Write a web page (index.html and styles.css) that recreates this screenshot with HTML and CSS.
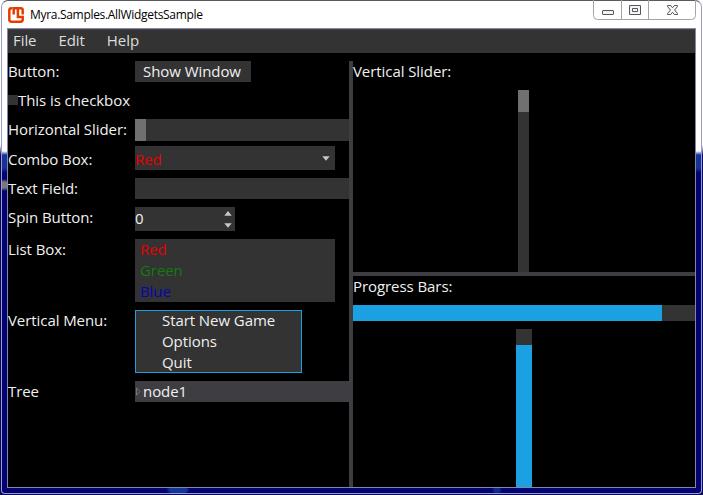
FILE: index.html
```html
<!DOCTYPE html>
<html lang="en">
<head>
<meta charset="utf-8">
<title>Myra.Samples.AllWidgetsSample</title>
<link rel="stylesheet" href="styles.css">
</head>
<body>
<div class="window">
  <header class="titlebar">
    <svg class="logo" width="16" height="16" viewBox="0 0 16 16"><path d="M4.200 1.300H3.500Q1.300 1.300 1.300 3.500v9Q1.300 14.700 3.500 14.700h9Q14.700 14.700 14.700 12.500V10H9.900V2M5.700 7.500V1.300h7Q14.700 1.300 14.700 3.300V7.500" fill="none" stroke="#e73c00" stroke-width="2.500"/></svg>
    <span class="title">Myra.Samples.AllWidgetsSample</span>
    <div class="controls">
      <svg width="103" height="20" viewBox="0 0 103 20">
        <path d="M.5 0V15.500Q.5 19.500 4.500 19.500H98.500Q102.500 19.500 102.500 15.500V0M28.500 0V19M55.500 0V19" fill="none" stroke="#a4a4a4"/>
        <rect x="9.500" y="10.500" width="11" height="4" rx=".5" fill="#f4f4f4" stroke="#55565c"/>
        <path d="M36.500 5.500h11v9h-11zM39.500 8.500h5v3h-5z" fill="#f4f4f4" stroke="#55565c"/>
        <path d="M74.500 5.500h3.200l1.800 2.200 1.800-2.200h3.200v1L81.600 10l2.900 3.500v1h-3.200l-1.800-2.200-1.800 2.200h-3.200v-1L77.400 10l-2.900-3.500z" fill="#f4f4f4" stroke="#55565c"/>
      </svg>
    </div>
  </header>
  <main class="client">
    <nav class="menubar"><span>File</span><span>Edit</span><span>Help</span></nav>
    <div class="split">
      <section class="form">
        <div class="row"><label>Button:</label><button class="button">Show Window</button></div>
        <div class="row"><i class="box"></i><span>This is checkbox</span></div>
        <div class="row slider-row"><label>Horizontal Slider:</label><div class="slider"><i class="thumb"></i></div></div>
        <div class="row"><label>Combo Box:</label><div class="combo"><span class="red">Red</span><svg width="8" height="5" viewBox="0 0 8 5"><path d="M.3.300h7.400L4 4.800z"/></svg></div></div>
        <div class="row"><label>Text Field:</label><div class="field"></div></div>
        <div class="row spin-row"><label>Spin Button:</label><div class="spin"><span>0</span><svg width="8" height="17" viewBox="0 0 8 17"><path d="M4 0l3.700 4.700H.3zM.3 12.300h7.400L4 16.800z"/></svg></div></div>
        <div class="row"><label>List Box:</label><div class="list"><span class="red">Red</span><span class="green">Green</span><span class="blue">Blue</span></div></div>
        <div class="row"><label>Vertical Menu:</label><div class="menu"><span>Start New Game</span><span>Options</span><span>Quit</span></div></div>
        <div class="row"><label>Tree</label><div class="tree"><svg width="8" height="9" viewBox="0 0 8 9"><path d="M1.500.8v7.400L5 4.500z" fill="none" stroke="#77777a"/></svg><span>node1</span></div></div>
      </section>
      <div class="divider"></div>
      <section class="side">
        <div class="top"><span>Vertical Slider:</span><div class="vslider"><i class="thumb"></i></div></div>
        <div class="hdivider"></div>
        <div class="bottom"><span>Progress Bars:</span><div class="progress"><i></i></div><div class="vprogress"><i></i></div></div>
      </section>
    </div>
  </main>
</div>
</body>
</html>
```
FILE: styles.css
```css
* { box-sizing: border-box; }
body { margin: 0; height: 495px; overflow: hidden; background: linear-gradient(#fff 0 145px, #08085c 155px); font: 15px/21px "Open Sans", sans-serif; letter-spacing: -.07px; color: #f0f0f0; }
.window { height: 494px; margin: 0 1px; padding: 0 6px 5px; border: 1px solid #5a5a5c; border-color: #5a5a5c #9b9bc4 #9b9bc4; border-radius: 7px 7px 4px 4px; background: radial-gradient(ellipse 12px 5px at 176px 489px, #103898 70%, transparent), radial-gradient(ellipse 5px 5px at 495px 489px, #102b86 50%, transparent), radial-gradient(ellipse 8px 6px at 2px 184px, #77777f 50%, transparent), linear-gradient(#fff 0 150px, #16329a 154px 167px, #020270 172px); }
.titlebar { height: 28px; display: flex; align-items: flex-start; }
.logo { margin: 6px 0 0 0; }
.title { margin: 3px 0 0 6px; font: 12px/22px "Open Sans", sans-serif; letter-spacing: -.31px; color: #000; white-space: nowrap; }
.controls { margin: -1px -1px 0 auto; height: 20px; }
.controls svg { display: block; }
.client { width: 687px; height: 458px; background: #000; outline: 1px solid; outline-color: #8585a8; }
.menubar { height: 24px; display: flex; gap: 22px; padding: 0 5px; background: #333; color: #ddd; border-top: 1px solid #444; }
.split { display: flex; height: 434px; padding-top: 8px; }
.form { width: 341px; display: flex; flex-direction: column; gap: 8px; }
.row { display: flex; min-height: 21px; align-items: flex-start; }
.slider-row { height: 22px; }
.row label { width: 127px; white-space: nowrap; }
.button { width: 116px; height: 21px; padding: 0 2px 0 0; border: 0; background: #333; color: #f0f0f0; font: inherit; letter-spacing: inherit; }
.box { width: 10px; height: 10px; margin-top: 5px; background: #333; }
.slider { flex: 1; height: 22px; background: #333; }
.thumb { display: block; width: 11px; height: 22px; background: #707070; }
.combo { width: 200px; height: 24px; margin: -3px 0 0; padding: 3px 5px 0 0; display: flex; justify-content: space-between; background: #333; }
.combo svg { margin-top: 7px; }
.combo svg, .spin svg { fill: #c8c8c8; }
.field { flex: 1; height: 21px; background: #333; }
.spin { width: 100px; height: 24px; padding: 1px 3px 0 0; display: flex; justify-content: space-between; background: #333; }
.spin svg { margin-top: 3px; }
.list { width: 200px; padding-left: 5px; display: flex; flex-direction: column; background: #333; }
.red { color: #e60000; }
.green { color: #147a14; }
.blue { color: #0505b5; }
.menu { width: 167px; height: 63px; padding-left: 26px; border: 1px solid #1ba1e2; background: #333; }
.menu span { display: block; height: 21px; line-height: 19px; }
.tree { flex: 1; display: flex; background: #3e3d42; }
.tree svg { margin-top: 6px; }
.divider { width: 4px; background: #3e3d42; }
.side { width: 342px; display: flex; flex-direction: column; }
.top { height: 211px; display: flex; flex-direction: column; gap: 8px; }
.vslider { width: 11px; flex: 1; margin-left: 165px; background: #333; }
.hdivider { height: 4px; background: #3e3d42; }
.bottom { flex: 1; display: flex; flex-direction: column; gap: 8px; }
.progress { height: 16px; background: #333; }
.progress i { display: block; width: 309px; height: 16px; background: #1ba1e2; }
.vprogress { flex: 1; width: 16px; margin-left: 163px; padding-top: 16px; display: flex; background: #333; }
.vprogress i { flex: 1; background: #1ba1e2; }
```
